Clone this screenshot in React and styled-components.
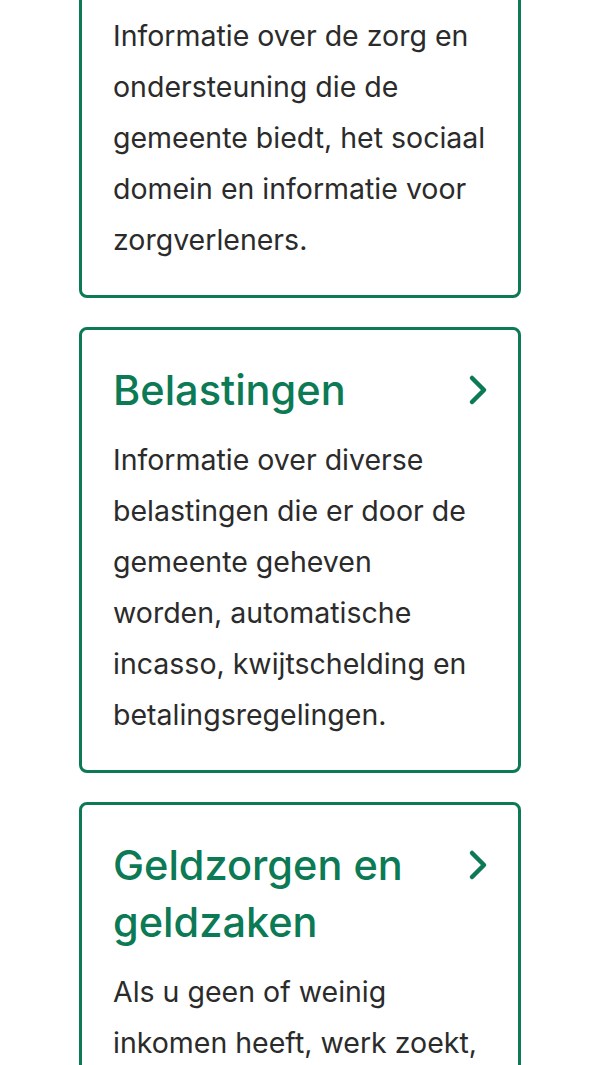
import React from "react";
import styled, { createGlobalStyle } from "styled-components";

const Global = createGlobalStyle`
  html, body {
    margin: 0;
    padding: 0;
    background: #ffffff;
  }
  body {
    font-family: Inter, "Noto Sans", sans-serif;
    overflow: hidden;
  }
`;

const Page = styled.div`
  width: 600px;
  height: 1065px;
  overflow: hidden;
`;

const List = styled.div`
  display: flex;
  flex-direction: column;
  gap: 29px;
  padding: 0 79px;
  margin-top: -25px;
`;

const Card = styled.a`
  display: block;
  border: 3px solid #0b7a55;
  border-radius: 8px;
  padding: 32px 30px 30px 31px;
  text-decoration: none;
  color: inherit;
`;

const Head = styled.div`
  display: flex;
  justify-content: space-between;
  align-items: flex-start;
  gap: 20px;
  margin-bottom: 15px;
`;

const Title = styled.h2`
  margin: 0;
  font-family: Inter, sans-serif;
  font-weight: 500;
  font-size: 41.5px;
  line-height: 57px;
  color: #0b7a55;
`;

const Chevron = styled.svg`
  flex: none;
  width: 20px;
  height: 32px;
  margin-top: 12px;
`;

const Text = styled.p`
  margin: 0;
  font-family: Inter, sans-serif;
  font-size: 28.5px;
  line-height: 51px;
  color: #2b2b2b;
`;

const Arrow = () => (
  <Chevron viewBox="0 0 20 32">
    <path
      d="M4 4 L16 16 L4 28"
      fill="none"
      stroke="#0b7a55"
      strokeWidth="4.5"
      strokeLinecap="round"
      strokeLinejoin="round"
    />
  </Chevron>
);

const cards = [
  {
    title: null,
    text: "Informatie over de zorg en ondersteuning die de gemeente biedt, het sociaal domein en informatie voor zorgverleners.",
  },
  {
    title: "Belastingen",
    text: "Informatie over diverse belastingen die er door de gemeente geheven worden, automatische incasso, kwijtschelding en betalingsregelingen.",
  },
  {
    title: "Geldzorgen en geldzaken",
    text: "Als u geen of weinig inkomen heeft, werk zoekt, of schulden heeft, kunt u bij de gemeente terecht.",
  },
];

const App = () => {
  return (
    <Page>
      <Global />
      <List>
        {cards.map((c, i) => (
          <Card key={i} href="#">
            {c.title && (
              <Head>
                <Title>{c.title}</Title>
                <Arrow />
              </Head>
            )}
            <Text>{c.text}</Text>
          </Card>
        ))}
      </List>
    </Page>
  );
};

export default App;
